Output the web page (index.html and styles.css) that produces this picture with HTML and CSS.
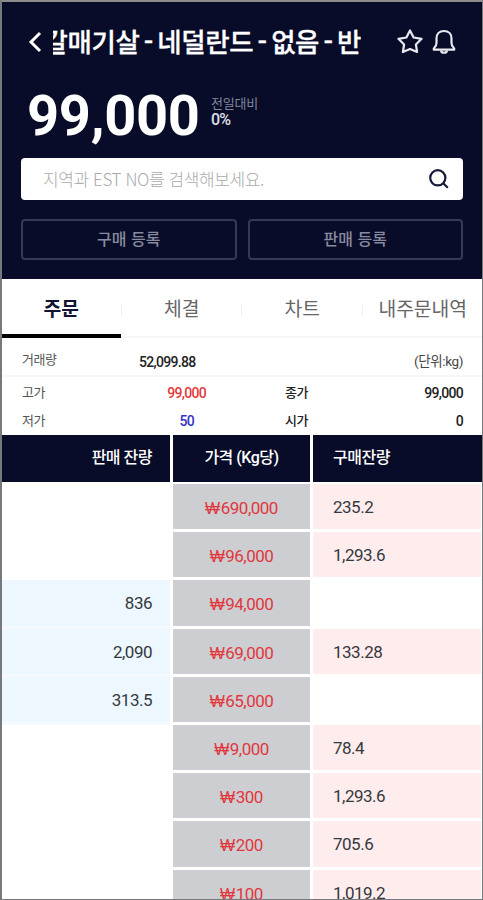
FILE: index.html
```html
<!DOCTYPE html>
<html lang="ko">
<head>
    <meta charset="UTF-8">
    <meta name="viewport" content="width=device-width, initial-scale=1.0">
    <title>주문</title>
    <link rel="stylesheet" href="styles.css">
</head>
<body>
    <div class="container">
        <header class="header">
            <div class="title-bar">
                <svg class="icon-back" viewBox="0 0 14 22"><path d="M12 2 3 11l9 9"/></svg>
                <div class="title"><h1>갈매기살 - 네덜란드 - 없음 - 반</h1></div>
                <svg class="icon-star" viewBox="0 0 28 26"><path d="m14 2.500 3.600 7 8 1.300-5.700 5.700 1.200 7.500-7.100-3-7.100 3 1.200-7.500-5.700-5.700 8-1.300z"/></svg>
                <svg class="icon-bell" viewBox="0 0 24 26"><path d="M12 2C7.500 2 4.500 5 4.500 9.500V14c0 2.500-1 4-2.700 5.500v1.200h20.400v-1.200C20.500 18 19.500 16.500 19.500 14V9.500C19.500 5 16.500 2 12 2z"/><path d="M9 21.500c.5 3 5.500 3 6 0"/></svg>
            </div>

            <div class="price">
                <strong class="price-value">99,000</strong>
                <div class="price-diff">
                    <span class="diff-label">전일대비</span>
                    <span class="diff-value">0%</span>
                </div>
            </div>

            <div class="search">
                <input type="text" class="search-input" placeholder="지역과 EST NO를 검색해보세요.">
                <svg class="icon-search" viewBox="0 0 20 20"><circle cx="8.800" cy="8.800" r="7.600"/><path d="m14.200 14.200 4.600 4.600"/></svg>
            </div>

            <div class="controls">
                <button>구매 등록</button>
                <button>판매 등록</button>
            </div>
        </header>

        <nav class="tabs">
            <a class="tab active">주문</a>
            <a class="tab">체결</a>
            <a class="tab">차트</a>
            <a class="tab">내주문내역</a>
        </nav>

        <div class="summary">
            <div class="summary-row volume">
                <span class="label">거래량</span>
                <span class="num">52,099.88</span>
                <span class="unit">(단위:kg)</span>
            </div>
            <div class="summary-row">
                <span class="label">고가</span>
                <span class="num red">99,000</span>
                <span class="name">종가</span>
                <span class="end">99,000</span>
            </div>
            <div class="summary-row">
                <span class="label">저가</span>
                <span class="num blue">50</span>
                <span class="name">시가</span>
                <span class="end">0</span>
            </div>
        </div>

        <div class="order-head">
            <div class="sell">판매 잔량</div>
            <div class="cost">가격 (Kg당)</div>
            <div class="buy">구매잔량</div>
        </div>
        <div class="order-book">
            <div class="sell"></div>
            <div class="cost"><span class="won">₩</span>690,000</div>
            <div class="buy filled">235.2</div>

            <div class="sell"></div>
            <div class="cost"><span class="won">₩</span>96,000</div>
            <div class="buy filled">1,293.6</div>

            <div class="sell filled">836</div>
            <div class="cost"><span class="won">₩</span>94,000</div>
            <div class="buy"></div>

            <div class="sell filled">2,090</div>
            <div class="cost"><span class="won">₩</span>69,000</div>
            <div class="buy filled">133.28</div>

            <div class="sell filled">313.5</div>
            <div class="cost"><span class="won">₩</span>65,000</div>
            <div class="buy"></div>

            <div class="sell"></div>
            <div class="cost"><span class="won">₩</span>9,000</div>
            <div class="buy filled">78.4</div>

            <div class="sell"></div>
            <div class="cost"><span class="won">₩</span>300</div>
            <div class="buy filled">1,293.6</div>

            <div class="sell"></div>
            <div class="cost"><span class="won">₩</span>200</div>
            <div class="buy filled">705.6</div>

            <div class="sell"></div>
            <div class="cost"><span class="won">₩</span>100</div>
            <div class="buy filled">1,019.2</div>
        </div>
    </div>
</body>
</html>
```
FILE: styles.css
```css
* {
    box-sizing: border-box;
}
body {
    margin: 0;
    font-family: "Noto Sans CJK KR", sans-serif;
    background-color: #fff;
}
.container {
    height: 900px;
    overflow: hidden;
    border: 2px solid #77787c;
    border-top-color: #8b8b8b;
    border-right-width: 1px;
    border-bottom-width: 1px;
}
svg {
    display: block;
    flex: none;
    fill: none;
    stroke: #e9eaf0;
    stroke-width: 2.200;
    stroke-linejoin: round;
}
.header {
    height: 277px;
    margin-left: -2px;
    margin-right: -1px;
    padding: 18px 20px 0 21px;
    background-color: #080c29;
    border-left: 2px solid #0c0d13;
    color: #fff;
}
.title-bar {
    display: flex;
    align-items: center;
    height: 44px;
}
.icon-back {
    width: 14px;
    height: 22px;
    margin-left: 5px;
    stroke: #fff;
    stroke-width: 3;
    stroke-linejoin: miter;
}
.title {
    display: flex;
    justify-content: flex-end;
    width: 308px;
    margin-left: 11px;
    overflow: hidden;
}
h1 {
    flex: none;
    margin: 0;
    font-size: 26.5px;
    line-height: 42px;
    height: 44px;
    font-weight: 500;
    letter-spacing: -0.4px;
    word-spacing: -2.6px;
    white-space: nowrap;
    -webkit-text-stroke: 0.3px #fff;
}
.icon-star {
    width: 28px;
    height: 26px;
    margin-left: 35px;
    margin-bottom: 2px;
}
.icon-bell {
    width: 24px;
    height: 26px;
    margin-left: 8px;
    margin-bottom: 1px;
}
.price {
    display: flex;
    height: 94px;
    padding-left: 4px;
}
.price-value {
    width: 184px;
    font-family: Roboto, sans-serif;
    font-size: 56px;
    line-height: 105px;
    font-weight: 700;
    letter-spacing: -0.3px;
}
.price-diff {
    display: flex;
    flex-direction: column;
    padding-top: 30px;
    font-size: 13px;
    line-height: 18px;
}
.diff-label {
    color: #84869a;
    letter-spacing: -0.2px;
}
.diff-value {
    color: #dfe0e8;
    font-family: Roboto, sans-serif;
    font-size: 16px;
    line-height: 16px;
    font-weight: 500;
    letter-spacing: -0.8px;
}
.search {
    display: flex;
    align-items: center;
    height: 42px;
    margin-left: -2px;
    padding: 0 14px 0 22px;
    border-radius: 4px;
    background-color: #fff;
}
.search-input {
    flex: 1;
    padding: 0 0 2px;
    border: 0;
    outline: 0;
    font-family: inherit;
    font-size: 17px;
    font-weight: 300;
    letter-spacing: -0.4px;
}
.search-input::placeholder {
    color: #aaa;
}
.icon-search {
    width: 20px;
    height: 20px;
    stroke: #171a3a;
}
.controls {
    display: flex;
    gap: 11px;
    margin: 19px 0 0 -2px;
}
button {
    flex: 1;
    height: 41px;
    padding: 0 0 3px;
    border: 2px solid #353955;
    border-radius: 4px;
    background: none;
    color: #888a9f;
    font-family: inherit;
    font-size: 16px;
    font-weight: 500;
}
.tabs {
    display: grid;
    grid-template-columns: repeat(4, 120.5px);
    height: 59px;
    margin-left: -2px;
    border-bottom: 2px solid #f7f7f7;
}
.tab {
    display: flex;
    justify-content: center;
    height: 59px;
    padding-left: 2px;
    color: #666;
    font-size: 19.3px;
    line-height: 59px;
    white-space: nowrap;
}
.tab + .tab {
    background: linear-gradient(#eee, #eee) no-repeat 0 26px / 1px 11px;
}
.tab.active {
    border-bottom: 4px solid #000;
    color: #111433;
    font-weight: 700;
}
.summary {
    height: 97px;
    font-size: 13px;
}
.summary-row {
    display: grid;
    grid-template-columns: 118px 86px 103px 1fr;
    height: 28px;
    padding: 0 19px 0 20px;
    line-height: 25px;
    white-space: nowrap;
    letter-spacing: -0.4px;
}
.summary-row.volume {
    grid-template-columns: 117px 1fr auto;
    height: 39px;
    margin-bottom: 2px;
    border-bottom: 2px solid #f7f7f7;
    line-height: 46px;
}
.label {
    color: #555;
}
.volume .label {
    line-height: 42px;
}
.num,
.end {
    color: #222;
    font-family: Roboto, sans-serif;
    font-size: 14px;
    font-weight: 500;
    line-height: 28px;
    letter-spacing: -0.7px;
}
.volume .num {
    line-height: 48px;
}
.num.red,
.num.blue {
    padding-right: 20px;
    text-align: right;
    color: #e5373b;
}
.num.blue {
    padding-right: 32px;
    color: #3432c4;
}
.unit {
    color: #444;
    font-family: Roboto, "Noto Sans CJK KR", sans-serif;
    font-size: 13.5px;
}
.name {
    padding-left: 59px;
    color: #222;
    font-weight: 500;
}
.end {
    text-align: right;
}
.order-head,
.order-book {
    display: grid;
    grid-template-columns: 168px 137px 1fr;
    column-gap: 3px;
}
.order-head {
    height: 47px;
    margin-right: -1px;
    margin-bottom: 2px;
    font-family: Roboto, "Noto Sans CJK KR", sans-serif;
    font-size: 16px;
    line-height: 46px;
    font-weight: 500;
    letter-spacing: -0.5px;
    color: #fff;
}
.order-head > div {
    background-color: #080c29;
}
.order-head .sell {
    margin-left: -2px;
}
.order-book {
    grid-auto-rows: 45.2px;
    row-gap: 3px;
    padding-right: 1px;
    font-family: Roboto, "Noto Sans CJK KR", sans-serif;
    font-size: 17px;
    line-height: 46px;
    letter-spacing: -0.5px;
    color: #35383d;
}
.sell {
    padding-right: 18px;
    text-align: right;
}
.cost {
    text-align: center;
}
.buy {
    padding-left: 20px;
}
.order-book .sell.filled {
    background-color: #edf7ff;
    box-shadow: 0 3px #f4faff;
}
.order-book .cost {
    background-color: #cdced2;
    color: #e0383d;
    line-height: 48px;
}
.order-book .buy.filled {
    background-color: #ffeded;
}
.won {
    font-family: "Liberation Sans", sans-serif;
    font-size: 16px;
    letter-spacing: 0.5px;
}
```
